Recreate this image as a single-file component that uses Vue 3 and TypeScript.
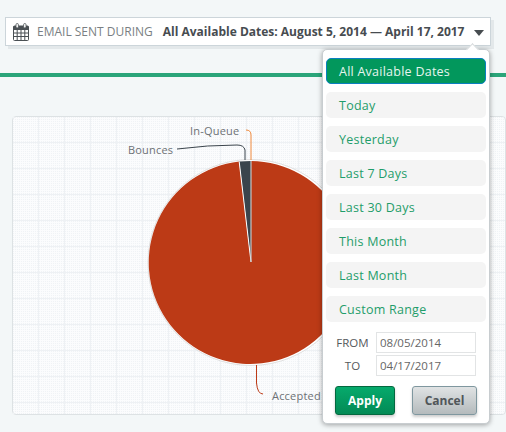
<script setup lang="ts">
const ranges: string[] = ['All Available Dates','Today','Yesterday','Last 7 Days','Last 30 Days','This Month','Last Month','Custom Range']
const hLines: number[] = Array.from({length:12},(_,i)=>25+i*26)
const vLines: number[] = Array.from({length:19},(_,i)=>25+i*26)
</script>

<template>
  <div class="page">
    <div class="bar">
      <svg class="cal" width="16" height="18" viewBox="0 0 16 18">
        <rect x="0.5" y="3" width="15" height="14.5" rx="1" fill="#fff" stroke="#4a5054"/>
        <rect x="0.5" y="3" width="15" height="4" fill="#4a5054"/>
        <path d="M0.5 10h15M0.5 13.5h15M4.2 7v10.5M8 7v10.5M11.8 7v10.5" stroke="#4a5054" stroke-width="1" fill="none"/>
        <rect x="3" y="0.5" width="2.4" height="4.5" rx="1.2" fill="#fff" stroke="#4a5054" stroke-width="0.8"/>
        <rect x="10.6" y="0.5" width="2.4" height="4.5" rx="1.2" fill="#fff" stroke="#4a5054" stroke-width="0.8"/>
      </svg>
      <span class="label">EMAIL SENT DURING</span>
      <span class="value">All Available Dates: August 5, 2014 — April 17, 2017</span>
      <span class="caret"></span>
    </div>
    <div class="rule"></div>
    <div class="panel">
      <svg class="chart" width="492" height="297" viewBox="0 0 492 297">
        <defs>
          <pattern id="dots" width="2" height="2" patternUnits="userSpaceOnUse">
            <rect x="0" y="0" width="1" height="1" fill="#f0f3f6"/>
          </pattern>
        </defs>
        <rect width="492" height="297" fill="url(#dots)"/>
        <path v-for="y in hLines" :key="'h'+y" :d="`M0 ${y+0.5}H492`" stroke="#eef1f4" stroke-width="1"/>
        <path v-for="x in vLines" :key="'v'+x" :d="`M${x+0.5} 0V297`" stroke="#eef1f4" stroke-width="1"/>
        <circle cx="238" cy="145.5" r="103" fill="#fff" stroke="#d8d8d8" stroke-width="0.8"/>
        <path d="M238 145L238 44A101.5 101.5 0 1 1 226.2 44.6Z" fill="#bc3a16"/>
        <path d="M238 145L226.2 44.6L238 44Z" fill="#3a444c"/>
        <path d="M238 145L226.2 44.6" fill="none" stroke="#fff" stroke-width="1"/>
        <path d="M238 145V44" fill="none" stroke="#c4c6c8" stroke-width="1.2"/>
        <path d="M232 43V33Q231 28 224 28Q195 28 164 32" fill="none" stroke="#3a444c" stroke-width="1"/>
        <path d="M238 43V18Q238 13 233 13" fill="none" stroke="#f08a3c" stroke-width="1"/>
        <path d="M243.5 248V266Q244.5 277 250 277" fill="none" stroke="#bc3a16" stroke-width="1"/>
      </svg>
      <span class="tag bounces">Bounces</span>
      <span class="tag queue">In-Queue</span>
      <span class="tag accepted">Accepted</span>
    </div>
    <div class="menu">
      <span class="arrow"></span>
      <button v-for="(r,i) in ranges" :key="r" class="item" :class="{active:i===0}">{{ r }}</button>
      <div class="field"><label>FROM</label><input value="08/05/2014" /></div>
      <div class="field to"><label>TO</label><input value="04/17/2017" /></div>
      <div class="actions">
        <button class="btn apply">Apply</button>
        <button class="btn cancel">Cancel</button>
      </div>
    </div>
  </div>
</template>

<style>
html, body { margin: 0; background: #f3f7f8; }
</style>
<style scoped>
.page { position: relative; width: 506px; height: 432px; overflow: hidden; background: #f3f7f8; font-family: "Open Sans", sans-serif; padding: 17px 0 0 5px; box-sizing: border-box; }
.bar { width: 486px; height: 29px; box-sizing: border-box; background: #fff; border: 1px solid #ccd5da; box-shadow: 3px 3px 0 #e3e8ea; display: flex; align-items: center; padding-left: 7px; white-space: nowrap; }
.cal { flex: none; margin-right: 8px; }
.label { font-size: 12px; color: #7a7f83; margin-right: 10px; }
.value { font-size: 12px; font-weight: 700; color: #474c50; }
.caret { margin-left: 10px; width: 0; height: 0; border-left: 5px solid transparent; border-right: 5px solid transparent; border-top: 6px solid #474c50; margin-top: 2px; }
.rule { height: 4px; background: #2ba57a; margin: 27px 0 0 -5px; width: 506px; }
.panel { position: relative; margin: 39px 0 0 7px; width: 494px; height: 299px; box-sizing: border-box; border: 1px solid #dde2e4; border-radius: 4px; background: #fbfcfd; }
.chart { display: block; }
.tag { position: absolute; font-size: 11px; color: #6d7175; line-height: 14px; white-space: nowrap; letter-spacing: 0.2px; }
.bounces { left: 115px; top: 26px; }
.queue { left: 177px; top: 7px; }
.accepted { left: 259px; top: 272px; }
.menu { position: absolute; left: 322px; top: 49px; width: 168px; height: 375px; box-sizing: border-box; background: #fff; border-radius: 5px; border: 1px solid #c8cdd0; box-shadow: 0 1px 5px rgba(0,0,0,.35); padding: 8px 3px 0; display: flex; flex-direction: column; gap: 8px; }
.arrow { position: absolute; top: -5px; left: 145px; width: 9px; height: 9px; background: #fff; transform: rotate(45deg); border-left: 1px solid #d5d9db; border-top: 1px solid #d5d9db; box-sizing: border-box; }
.item { position: relative; display: block; height: 26px; width: 160px; flex: none; border: none; border-radius: 5px; background: #f4f4f4; color: #1f9d6a; font: 12.5px/24px "Open Sans", sans-serif; letter-spacing: .25px; text-align: left; padding: 2px 0 0 13px; }
.item.active { background: #02975c; color: #e6f5ee; border: 1px solid #0a7fc0; line-height: 22px; padding-left: 12px; }
.field { display: flex; align-items: center; height: 21px; color: #55595c; font-size: 11.5px; margin-top: 2px; }
.field.to { margin-top: -6px; }
.field label { width: 50px; text-align: center; padding-left: 3px; box-sizing: border-box; }
.field input { width: 100px; height: 21px; box-sizing: border-box; border: 1px solid #e2e4e5; background: #fff; font: 11.5px "Open Sans", sans-serif; color: #666; padding: 0 3px; outline: none; }
.actions { display: flex; gap: 17px; padding-left: 9px; margin-top: 2px; }
.btn { height: 29px; border-radius: 3px; font: 700 12px "Open Sans", sans-serif; box-shadow: 0 2px 3px rgba(0,0,0,.2); padding: 0; }
.apply { width: 60px; color: #fff; background: linear-gradient(#06aa6c, #038a55); border: 1px solid #04683f; }
.cancel { width: 65px; color: #505659; background: linear-gradient(#e0e3e4, #b4babc); border: 1px solid #7f979f; }
</style>
